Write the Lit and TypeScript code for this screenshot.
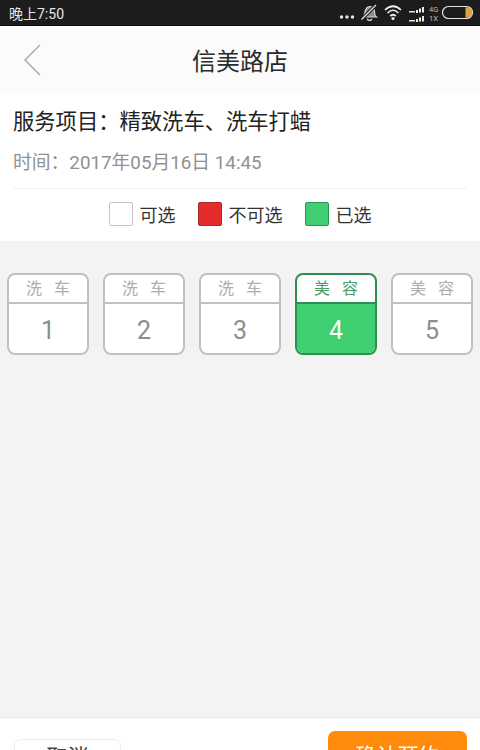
import { LitElement, html, css, svg } from "lit";
import { customElement } from "lit/decorators.js";

const SLOTS = [
  { type: "洗车", n: 1 },
  { type: "洗车", n: 2 },
  { type: "洗车", n: 3 },
  { type: "美容", n: 4, selected: true },
  { type: "美容", n: 5 },
];

@customElement("app-root")
export class AppRoot extends LitElement {
  static styles = css`
    :host {
      display: flex;
      flex-direction: column;
      width: 480px;
      height: 750px;
      overflow: hidden;
      background: #f3f3f3;
      font-family: "Roboto", "Noto Sans CJK SC", sans-serif;
      color: #222;
    }
    .status {
      flex: none;
      height: 26px;
      box-sizing: border-box;
      background: #1c1c1c;
      border-bottom: 1px solid #0c0c0c;
      display: flex;
      align-items: center;
      justify-content: space-between;
      padding: 0 5px 0 9px;
      color: #e6e6e6;
      font-size: 14px;
    }
    .status-icons {
      display: block;
    }
    .nav {
      flex: none;
      height: 67px;
      background: #fbfbfb;
      display: grid;
      grid-template-columns: 1fr auto 1fr;
      align-items: center;
    }
    .back {
      display: block;
      margin-left: 23px;
    }
    .title {
      font-size: 24px;
      color: #2a2a2a;
    }
    .info {
      flex: none;
      height: 148px;
      box-sizing: border-box;
      background: #fff;
      padding: 0 13px;
      display: flex;
      flex-direction: column;
    }
    .service {
      height: 52px;
      display: flex;
      align-items: center;
      font-size: 21.3px;
      color: #222;
      white-space: nowrap;
    }
    .time {
      height: 26px;
      margin-top: 2px;
      display: flex;
      align-items: center;
      font-size: 18.8px;
      color: #919191;
      white-space: nowrap;
    }
    .divider {
      height: 1px;
      background: #f1f1f1;
      margin-top: 15px;
    }
    .legend {
      flex: 1;
      display: flex;
      align-items: center;
      justify-content: center;
      gap: 22px;
      padding: 0 0 2px 0;
      font-size: 18px;
      color: #333;
    }
    .legend-item {
      display: flex;
      align-items: center;
      gap: 7px;
    }
    .swatch {
      width: 24px;
      height: 24px;
      box-sizing: border-box;
      border-radius: 2px;
      border: 1px solid #c4c4c4;
      background: #fff;
    }
    .swatch.taken {
      background: #e32b2b;
      border-color: #a82a2a;
    }
    .swatch.picked {
      background: #3fcf70;
      border-color: #2b9651;
    }
    .slots {
      flex: 1;
      display: flex;
      gap: 14px;
      padding: 32px 7px 0;
      align-items: flex-start;
    }
    .slot {
      width: 82px;
      height: 82px;
      box-sizing: border-box;
      border: 2px solid #c0c0c0;
      border-radius: 8px;
      background: #fff;
      overflow: hidden;
      display: flex;
      flex-direction: column;
    }
    .slot-type {
      flex: none;
      height: 29px;
      box-sizing: border-box;
      padding: 0 0 3px 12px;
      border-bottom: 2px solid #c0c0c0;
      display: flex;
      align-items: center;
      justify-content: center;
      font-size: 16px;
      letter-spacing: 12px;
      color: #adadad;
      white-space: nowrap;
    }
    .slot-num {
      flex: 1;
      display: flex;
      align-items: center;
      justify-content: center;
      padding-top: 3px;
      font-size: 25px;
      color: #8d8d8d;
    }
    .slot.selected {
      border-color: #2f8f52;
    }
    .slot.selected .slot-type {
      border-bottom-color: #2f8f52;
      color: #4c9a68;
    }
    .slot.selected .slot-num {
      background: #3fcf70;
      color: #f2fff6;
    }
    .footer {
      flex: none;
      height: 33px;
      box-sizing: border-box;
      background: #fff;
      border-top: 1px solid #e8e8e8;
      display: flex;
      justify-content: space-between;
      align-items: flex-start;
      padding: 0 13px 0 14px;
      overflow: hidden;
    }
    .btn {
      flex: none;
      box-sizing: border-box;
      height: 50px;
      border-radius: 7px;
      display: flex;
      justify-content: center;
      font-size: 21px;
      line-height: 24px;
      white-space: nowrap;
    }
    .btn.ghost {
      width: 107px;
      margin-top: 21px;
      padding-top: 5px;
      border: 1px solid #eeeeee;
      color: #444;
    }
    .btn.primary {
      width: 139px;
      margin-top: 13px;
      padding-top: 13px;
      background: #ff8a0c;
      color: #fff;
    }
  `;

  private statusIcons() {
    return html`<svg class="status-icons" width="140" height="22" viewBox="0 0 140 22">
      ${svg`
        <g fill="#e8e8e8">
          <circle cx="6.5" cy="15" r="1.7"></circle>
          <circle cx="12" cy="15" r="1.7"></circle>
          <circle cx="17.5" cy="15" r="1.7"></circle>
        </g>
        <path d="M28 15 C30.5 13 29 7 33 5 C37 3.5 39.5 7 39.5 10 C39.5 12 40 14 41.5 15 Z" fill="#8f8f8f" stroke="#d8d8d8" stroke-width="1.2"></path>
        <path d="M32 17 Q34.5 20 37 17" fill="none" stroke="#d8d8d8" stroke-width="1.5"></path>
        <path d="M26 18 L41 3" fill="none" stroke="#1c1c1c" stroke-width="3.4"></path>
        <path d="M26.5 17.5 L41 3" fill="none" stroke="#e4e4e4" stroke-width="1.3"></path>
        <g fill="none" stroke="#efefef" stroke-width="1.7">
          <path d="M50 8 Q58 0.5 66 8"></path>
          <path d="M52.6 11 Q58 5.5 63.4 11"></path>
          <path d="M55.2 14 Q58 11.5 60.8 14"></path>
        </g>
        <circle cx="58" cy="16.5" r="1.6" fill="#efefef"></circle>
        <g fill="#e8e8e8">
          <rect x="74" y="9" width="6" height="1.5"></rect>
          <rect x="81" y="8" width="2" height="3"></rect>
          <rect x="84" y="6.5" width="2" height="4"></rect>
          <rect x="87" y="5" width="2" height="5.5"></rect>
          <rect x="74" y="18" width="6" height="1.5"></rect>
          <rect x="81" y="17" width="2" height="3"></rect>
          <rect x="84" y="15.5" width="2" height="4"></rect>
          <rect x="87" y="14" width="2" height="5.5"></rect>
        </g>
        <text x="94" y="9.5" font-size="7.5" fill="#bdbdbd" font-family="Roboto, sans-serif">4G</text>
        <text x="94" y="19" font-size="7.5" fill="#bdbdbd" font-family="Roboto, sans-serif">1X</text>
        <rect x="107.5" y="4.5" width="30" height="12" rx="6" fill="none" stroke="#e2e2e2" stroke-width="1.2"></rect>
        <path d="M132 5.2 a5.2 5.3 0 0 1 0 10.6 h-1.5 v-10.6 Z" fill="#e0a23a"></path>
      `}
    </svg>`;
  }

  render() {
    return html`
      <div class="status">
        <span>晚上7:50</span>
        ${this.statusIcons()}
      </div>
      <div class="nav">
        <svg class="back" width="18" height="32" viewBox="0 0 18 32">
          <path d="M17 1 L2 16 L17 31" fill="none" stroke="#a6a6a6" stroke-width="1.4"></path>
        </svg>
        <div class="title">信美路店</div>
        <div></div>
      </div>
      <div class="info">
        <div class="service">服务项目：精致洗车、洗车打蜡</div>
        <div class="time">时间：2017年05月16日 14:45</div>
        <div class="divider"></div>
        <div class="legend">
          <div class="legend-item"><span class="swatch"></span>可选</div>
          <div class="legend-item"><span class="swatch taken"></span>不可选</div>
          <div class="legend-item"><span class="swatch picked"></span>已选</div>
        </div>
      </div>
      <div class="slots">
        ${SLOTS.map(
          (s) => html`<div class="slot ${s.selected ? "selected" : ""}">
            <div class="slot-type">${s.type}</div>
            <div class="slot-num">${s.n}</div>
          </div>`
        )}
      </div>
      <div class="footer">
        <div class="btn ghost">取消</div>
        <div class="btn primary">确认预约</div>
      </div>
    `;
  }
}
